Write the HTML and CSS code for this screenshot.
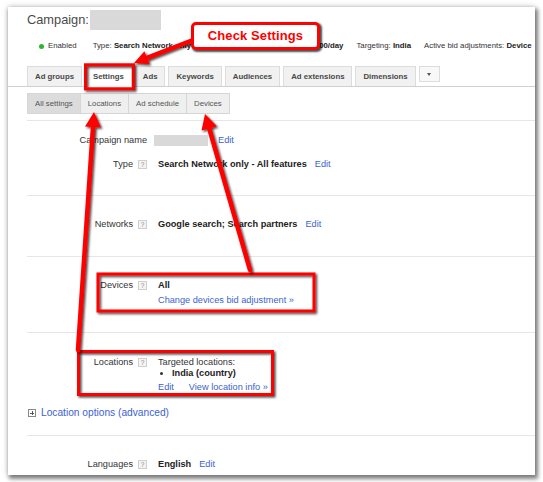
FILE: index.html
```html
<!DOCTYPE html>
<html>
<head>
<meta charset="utf-8">
<link rel="stylesheet" href="styles.css">
</head>
<body>
<div class="stage">
  <div class="card">
    <div class="title">
      <span class="title-text">Campaign:</span>
      <span class="redact redact-title"></span>
    </div>
    <div class="status">
      <span class="st-item st-enabled"><span class="dot"></span>Enabled</span>
      <span class="st-item st-type">Type: <b>Search Network only - All features</b></span>
      <span class="st-item st-budget">Budget: <b>₹10,000.00/day</b></span>
      <span class="st-item">Targeting: <b>India</b></span>
      <span class="st-item">Active bid adjustments: <b>Device</b></span>
    </div>
    <div class="tabs">
      <span class="tab">Ad groups</span>
      <span class="tab active">Settings</span>
      <span class="tab">Ads</span>
      <span class="tab">Keywords</span>
      <span class="tab">Audiences</span>
      <span class="tab">Ad extensions</span>
      <span class="tab">Dimensions</span>
      <span class="tab more"><span class="caret"></span></span>
    </div>
    <div class="subtabs">
      <span class="subtab active">All settings</span>
      <span class="subtab">Locations</span>
      <span class="subtab">Ad schedule</span>
      <span class="subtab">Devices</span>
    </div>
    <div class="settings">
      <section class="group g-first">
        <div class="row">
          <div class="label">Campaign name</div>
          <div class="value"><span class="redact redact-name"></span><a class="edit">Edit</a></div>
        </div>
        <div class="row">
          <div class="label">Type<span class="help">?</span></div>
          <div class="value"><b>Search Network only - All features</b><a class="edit">Edit</a></div>
        </div>
      </section>
      <section class="group">
        <div class="row">
          <div class="label">Networks<span class="help">?</span></div>
          <div class="value"><b>Google search; Search partners</b><a class="edit">Edit</a></div>
        </div>
      </section>
      <section class="group">
        <div class="row">
          <div class="label">Devices<span class="help">?</span></div>
          <div class="value stack">
            <b>All</b>
            <a class="link">Change devices bid adjustment »</a>
          </div>
        </div>
      </section>
      <section class="group g-loc">
        <div class="row">
          <div class="label">Locations<span class="help">?</span></div>
          <div class="value col">
            <span>Targeted locations:</span>
            <ul class="loc-list"><li><b>India (country)</b></li></ul>
            <div class="loc-links"><a class="link">Edit</a><a class="link">View location info »</a></div>
          </div>
        </div>
        <div class="loc-options"><span class="plus"></span><a class="link big">Location options (advanced)</a></div>
      </section>
      <section class="group">
        <div class="row">
          <div class="label">Languages<span class="help">?</span></div>
          <div class="value"><b>English</b><a class="edit">Edit</a></div>
        </div>
      </section>
    </div>
  </div>
</div>

<svg class="annot" width="543" height="482" viewBox="0 0 543 482">
  <defs>
    <filter id="sh" x="-10%" y="-10%" width="130%" height="130%">
      <feDropShadow dx="1.5" dy="1.5" stdDeviation="0.9" flood-color="#000" flood-opacity="0.75"/>
    </filter>
  </defs>
  <g filter="url(#sh)" fill="none" stroke="#f00" stroke-width="3">
    <rect x="85.5" y="64.8" width="48" height="24"/>
    <rect x="98" y="274" width="216" height="37"/>
    <rect x="78.5" y="351.5" width="194" height="43"/>
  </g>
  <g filter="url(#sh)">
    <g stroke="#f00" stroke-width="4.5" stroke-linecap="round">
      <line x1="193" y1="40" x2="147" y2="57.8"/>
      <line x1="78" y1="350" x2="93" y2="127"/>
      <line x1="250" y1="270" x2="209.2" y2="128.4"/>
    </g>
    <g fill="#f00">
      <polygon points="134,63 149.6,64.3 144.4,51.3"/>
      <polygon points="94,112 101,127.5 85,126.5"/>
      <polygon points="205,114 216.9,126.2 201.5,130.6"/>
    </g>
  </g>
</svg>
<div class="callout">Check Settings</div>
</body>
</html>
```

FILE: styles.css
```css
html, body {
  margin: 0;
  padding: 0;
  background: #ffffff;
}
body {
  font-family: "Liberation Sans", Arial, sans-serif;
  color: #333;
  width: 543px;
  height: 482px;
  overflow: hidden;
  position: relative;
}
.stage {
  padding: 7px 0 0 8px;
}
.card {
  width: 527px;
  height: 468px;
  box-sizing: border-box;
  background: #fff;
  overflow: hidden;
  box-shadow: 2px 3px 4px 1px rgba(0,0,0,0.45), 0 0 6px rgba(0,0,0,0.25);
  padding-top: 3px;
}
.title {
  display: flex;
  align-items: center;
  height: 20px;
  padding-left: 19px;
  gap: 1px;
}
.title-text {
  font-size: 12.8px;
  color: #4a4a4a;
  line-height: 20px;
}
.redact {
  display: inline-block;
  background: #d9d9d9;
}
.redact-title {
  width: 71px;
  height: 20px;
}
.status {
  display: flex;
  align-items: center;
  margin-top: 11px;
  padding-left: 31px;
  height: 10px;
  font-size: 7.8px;
  line-height: 10px;
  color: #333;
  white-space: nowrap;
  gap: 13px;
}
.status b { color: #222; }
.st-type { margin-left: 3px; }
.st-budget { margin-left: 7px; }
.st-enabled {
  display: flex;
  align-items: center;
}
.dot {
  display: inline-block;
  width: 5px;
  height: 5px;
  border-radius: 50%;
  background: #2fb52f;
  margin-right: 4px;
}
.tabs {
  display: flex;
  align-items: flex-end;
  margin-top: 15px;
  padding-left: 19px;
  height: 20px;
  border-bottom: 1px solid #d0d0d0;
  gap: 3px;
}
.tab {
  box-sizing: border-box;
  height: 20px;
  padding: 0 7px;
  border: 1px solid #dcdcdc;
  border-bottom: none;
  background: #f1f1f1;
  font-size: 7.8px;
  font-weight: bold;
  color: #484848;
  line-height: 19px;
  white-space: nowrap;
}
.tab.active {
  background: #fff;
  height: 21px;
  margin-bottom: -1px;
  border-color: #d0d0d0;
}
.tab.more {
  width: 21px;
  height: 16px;
  margin-bottom: 4px;
  border-bottom: 1px solid #dcdcdc;
  background: #f8f8f8;
  display: flex;
  align-items: center;
  justify-content: center;
  padding: 0;
}
.caret {
  width: 0;
  height: 0;
  border-left: 2.5px solid transparent;
  border-right: 2.5px solid transparent;
  border-top: 3px solid #555;
}
.subtabs {
  display: flex;
  margin: 6px 0 0 19px;
  height: 21px;
  width: max-content;
  border: 1px solid #d6d6d6;
  box-sizing: border-box;
  background: #efefef;
}
.subtab {
  padding: 0 7px;
  font-size: 7.8px;
  line-height: 19px;
  color: #555;
  border-left: 1px solid #d6d6d6;
  white-space: nowrap;
}
.subtab:first-child { border-left: none; }
.subtab.active { background: #dcdcdc; }

.settings {
  margin-top: 6px;
  margin-left: 19px;
  font-size: 9.2px;
  line-height: 11px;
}
.group {
  border-top: 1px solid #e6e6e6;
  padding: 23px 0 26px;
  display: flex;
  flex-direction: column;
  gap: 12px;
}
.group.g-first { padding-top: 14px; padding-bottom: 25px; gap: 13px; }
.group.g-loc { padding-top: 24px; padding-bottom: 16px; gap: 14px; }
.row {
  display: grid;
  grid-template-columns: 120px 1fr;
  column-gap: 11px;
  align-items: start;
}
.label {
  display: flex;
  justify-content: flex-end;
  align-items: center;
  gap: 5px;
  color: #333;
  white-space: nowrap;
  height: 11px;
}
.help {
  box-sizing: border-box;
  width: 9px;
  height: 9px;
  border: 1px solid #cfcfcf;
  background: #f4f4f4;
  color: #8a8a8a;
  font-size: 6.5px;
  line-height: 7px;
  text-align: center;
}
.value {
  display: flex;
  align-items: center;
  white-space: nowrap;
  color: #222;
}
.value b { color: #222; }
.redact-name {
  width: 54px;
  height: 11px;
  margin-left: -4px;
}
.edit, .link {
  color: #3a63cf;
  text-decoration: none;
}
.edit { margin-left: 8px; }
.redact-name + .edit { margin-left: 10px; }
.value.stack {
  flex-direction: column;
  align-items: flex-start;
  gap: 4px;
}
.value.col {
  flex-direction: column;
  align-items: flex-start;
  color: #333;
}
.loc-list {
  margin: 0;
  padding: 0 0 0 14px;
  list-style: disc;
}
.loc-list li { padding-left: 0; }
.loc-links {
  display: flex;
  gap: 15px;
  margin-top: 3px;
}
.loc-options {
  display: flex;
  align-items: center;
  gap: 5px;
  margin-left: 1px;
  height: 12px;
}
.plus {
  box-sizing: border-box;
  width: 8px;
  height: 8px;
  border: 1px solid #888;
  background: #fff;
  position: relative;
}
.plus::before, .plus::after {
  content: "";
  position: absolute;
  background: #555;
}
.plus::before { left: 1px; right: 1px; top: 2.5px; height: 1px; }
.plus::after { top: 1px; bottom: 1px; left: 2.5px; width: 1px; }
.link.big {
  font-size: 10.2px;
  line-height: 12px;
}

.annot {
  position: absolute;
  left: 0;
  top: 0;
  pointer-events: none;
}
.callout {
  position: absolute;
  left: 191px;
  top: 22px;
  width: 129px;
  height: 28px;
  box-sizing: border-box;
  border: 3px solid #f00;
  border-radius: 5px;
  background: #fff;
  box-shadow: 1.5px 1.5px 2px rgba(0,0,0,0.7);
  color: #f00;
  font-family: "Liberation Sans", Arial, sans-serif;
  font-weight: bold;
  font-size: 13px;
  line-height: 22px;
  text-align: center;
  letter-spacing: 0.1px;
}
```
